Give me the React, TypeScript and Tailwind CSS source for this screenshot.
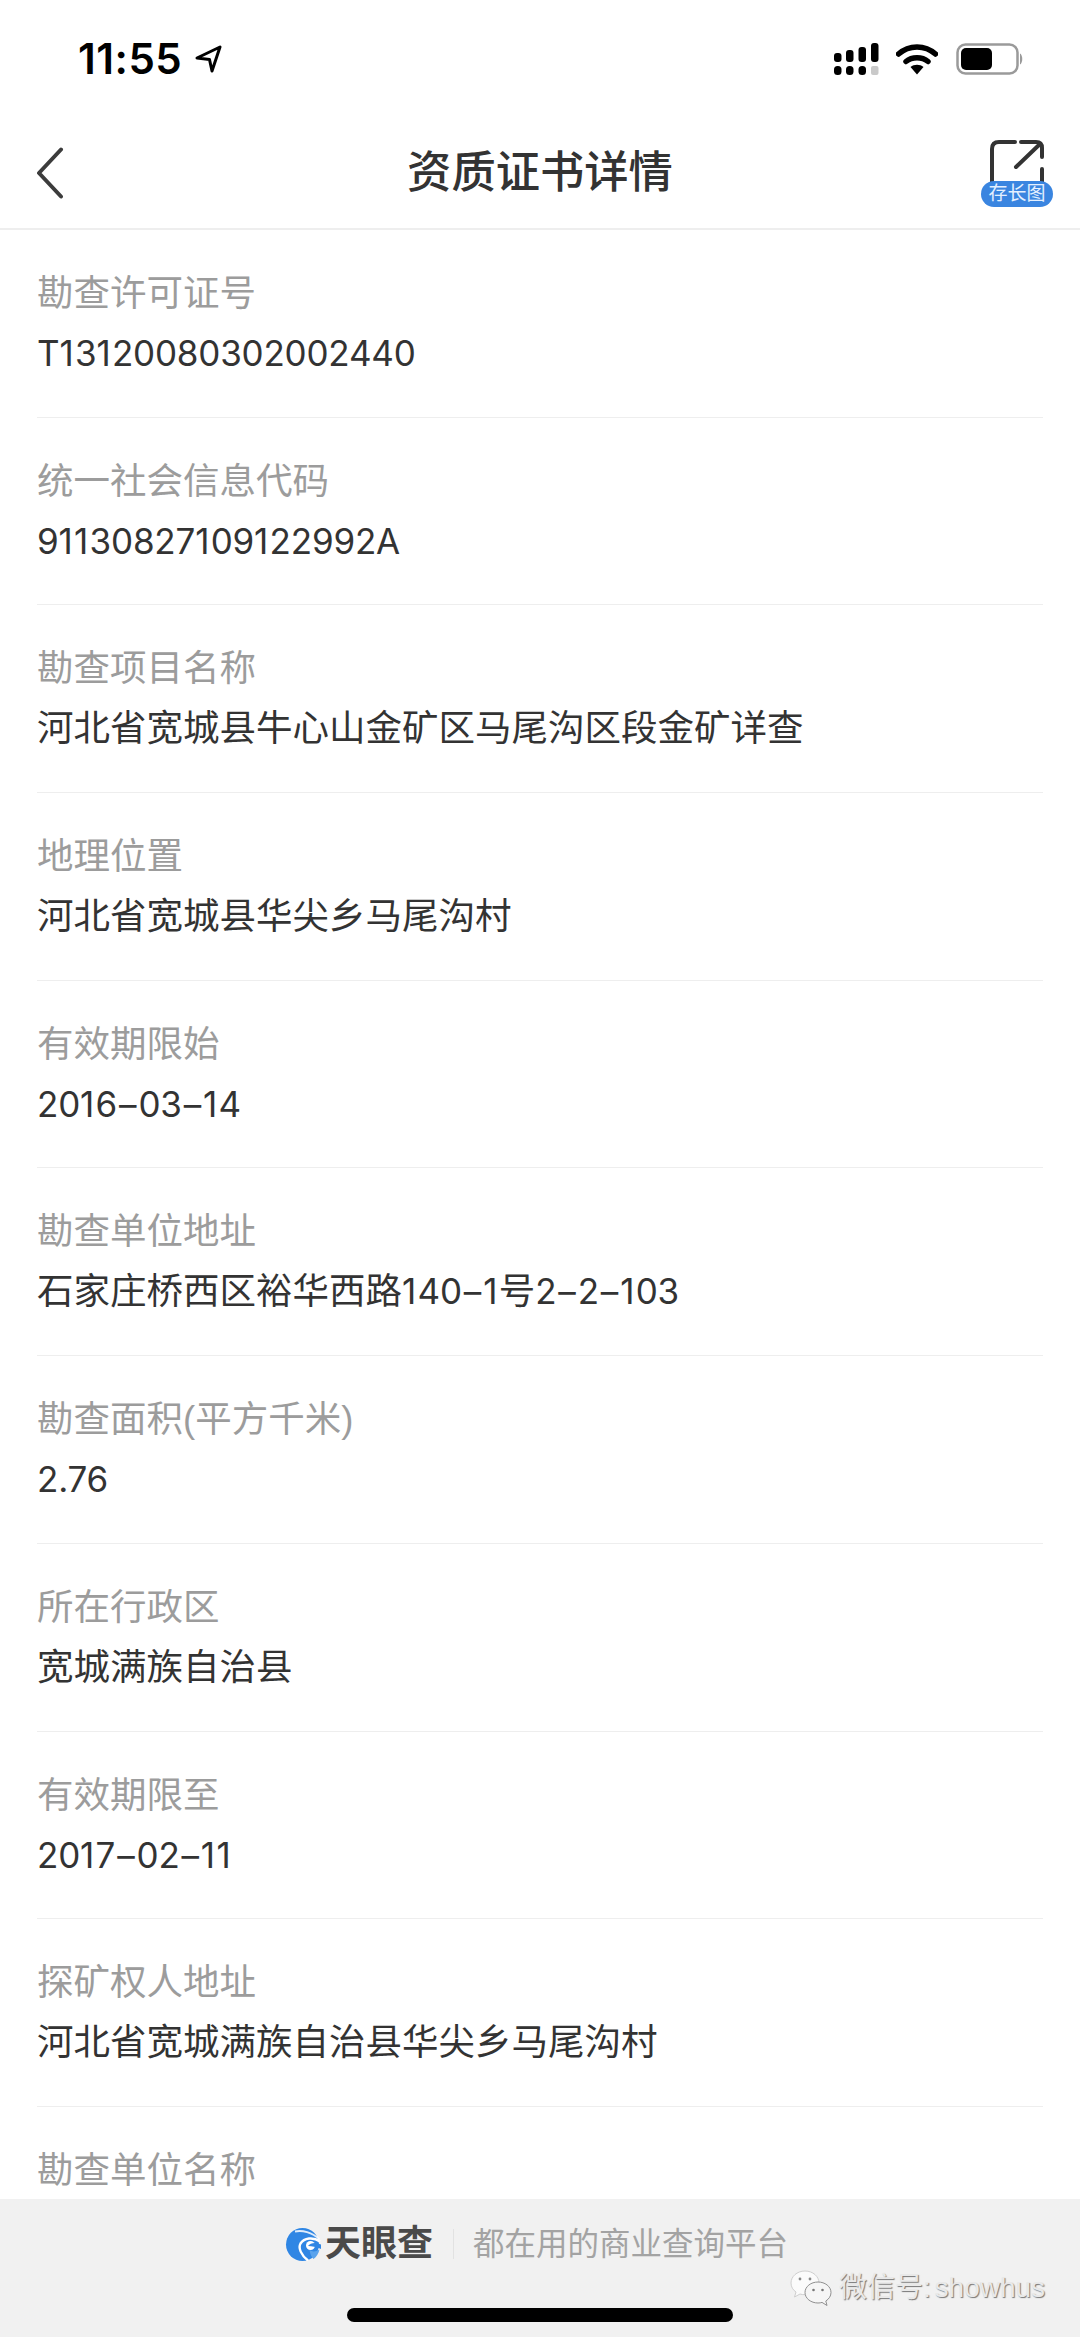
import React from "react";

const cjk = "font-['Liberation_Sans','Noto_Sans_CJK_SC',sans-serif]";

// Licence fields in display order
const fields: { label: string; value?: string }[] = [
  { label: "勘查许可证号", value: "T13120080302002440" },
  { label: "统一社会信息代码", value: "91130827109122992A" },
  { label: "勘查项目名称", value: "河北省宽城县牛心山金矿区马尾沟区段金矿详查" },
  { label: "地理位置", value: "河北省宽城县华尖乡马尾沟村" },
  { label: "有效期限始", value: "2016–03–14" },
  { label: "勘查单位地址", value: "石家庄桥西区裕华西路140–1号2–2–103" },
  { label: "勘查面积(平方千米)", value: "2.76" },
  { label: "所在行政区", value: "宽城满族自治县" },
  { label: "有效期限至", value: "2017–02–11" },
  { label: "探矿权人地址", value: "河北省宽城满族自治县华尖乡马尾沟村" },
  { label: "勘查单位名称" },
];

const LocationArrow = () => (
  <svg width="28" height="30" viewBox="0 0 28 30" fill="none">
    <path d="M2 14 L25 3 L17 27 L14.5 15.5 Z" stroke="#000" strokeWidth="3" strokeLinejoin="round" />
  </svg>
);

const SignalIcon = () => (
  <svg width="46" height="33" viewBox="0 0 46 33">
    <rect x="1" y="10" width="7.5" height="9" rx="3" fill="#000" />
    <rect x="13" y="7" width="7.5" height="12" rx="3" fill="#000" />
    <rect x="25.5" y="4" width="7.5" height="15" rx="3" fill="#000" />
    <rect x="38" y="0" width="7.5" height="19" rx="3" fill="#000" />
    <rect x="1" y="23" width="7.5" height="9" rx="3.5" fill="#000" />
    <rect x="13" y="23" width="7.5" height="9" rx="3.5" fill="#000" />
    <rect x="25.5" y="23" width="7.5" height="9" rx="3.5" fill="#000" />
    <rect x="38" y="23" width="7.5" height="9" rx="2" fill="#c9c9c9" />
  </svg>
);

const WifiIcon = () => (
  <svg width="42" height="32" viewBox="0 0 42 32" fill="none">
    <path d="M2.5 11 C13 1.5 29 1.5 39.5 11" stroke="#000" strokeWidth="5.5" strokeLinecap="round" />
    <path d="M10 18.5 C16 13.5 26 13.5 32 18.5" stroke="#000" strokeWidth="5.5" strokeLinecap="round" />
    <path d="M14.5 24 C18 21 24 21 27.5 24 L21 31.5 Z" fill="#000" />
  </svg>
);

const BatteryIcon = () => (
  <svg width="68" height="32" viewBox="0 0 68 32" fill="none">
    <rect x="1.5" y="1.5" width="60" height="29" rx="8" stroke="#9a9a9a" strokeWidth="2.5" />
    <rect x="5" y="5" width="31" height="22" rx="5" fill="#000" />
    <path d="M64 10.5 C67 12 67 20 64 21.5 Z" fill="#9a9a9a" />
  </svg>
);

const BackIcon = () => (
  <svg width="28" height="52" viewBox="0 0 28 52" fill="none">
    <path d="M25 2.5 L3 26 L25 49.5" stroke="#3c3c3c" strokeWidth="4" strokeLinecap="round" strokeLinejoin="round" />
  </svg>
);

const ShareBadge = () => (
  <div className="relative h-[67px] w-[72px]">
    <svg className="absolute left-[9px] top-0" width="54" height="48" viewBox="0 0 54 48" fill="none">
      <path d="M25 2 H9 Q2 2 2 9 V48" stroke="#333" strokeWidth="4" strokeLinecap="round" />
      <path d="M31 2 H46 Q52 2 52 8 V17" stroke="#333" strokeWidth="4" strokeLinecap="round" />
      <path d="M52 29 V48" stroke="#333" strokeWidth="4" strokeLinecap="round" />
      <path d="M26 27 L50 4" stroke="#333" strokeWidth="4" strokeLinecap="round" />
    </svg>
    <div className={`absolute bottom-0 left-0 flex h-[26px] w-[72px] items-center justify-center rounded-full bg-[#3a85e0] text-[19px] leading-none text-[#e4f0ff] ${cjk}`}>
      存长图
    </div>
  </div>
);

const BrandLogo = () => (
  <svg width="36" height="33" viewBox="0 0 36 33" fill="none">
    <circle cx="17.5" cy="16.5" r="16.5" fill="#2f86e4" />
    <path d="M10 3.5 C17 2 27 4 34.5 11.5" stroke="#fff" strokeWidth="1.8" opacity="0.85" />
    <path d="M35 13.5 C28 8.5 19 10 15.5 15.5 C13 20 16 27 23 32.5" stroke="#fff" strokeWidth="2.4" />
    <circle cx="25.5" cy="17.5" r="4.5" fill="#fff" />
    <path d="M23 18 C25.5 14.5 31 14 36 16.5 L36 21 C31 18.5 27 18.5 23 18 Z" fill="#2f86e4" />
    <path d="M34.5 21.5 C31 24 27 24 24.5 22 C25 26 26.5 29 28.5 31 C31.5 29 33.5 25.5 34.5 21.5 Z" fill="#5aa3ec" />
  </svg>
);

const WeChatMark = () => (
  <svg width="42" height="38" viewBox="0 0 42 38" fill="none">
    <path d="M15 2 C7 2 1 7.5 1 14 C1 18 3 21 6 23 L4.5 28 L10 25 C11.5 25.5 13 25.7 15 25.7 C23 25.7 29 20 29 14 C29 7.5 23 2 15 2 Z" fill="#fbfbfb" stroke="#cfcfcf" strokeWidth="1" />
    <path d="M28 13 C21 13 15 17.5 15 23.5 C15 29.5 21 34 28 34 C29.5 34 31 33.8 32 33.4 L37 36.5 L35.8 32 C39 30 41 27 41 23.5 C41 17.5 35 13 28 13 Z" fill="#f6f6f6" stroke="#8f8f8f" strokeWidth="1" />
    <circle cx="10" cy="10" r="1.4" fill="#8a8a8a" />
    <circle cx="20" cy="10" r="1.4" fill="#8a8a8a" />
    <circle cx="23.5" cy="21" r="1.3" fill="#777" />
    <circle cx="32.5" cy="21" r="1.3" fill="#777" />
  </svg>
);

// Latin runs use Inter; its "1" and en dash need a little extra room to sit like the app font
const LatinRun = ({ text }: { text: string }) => (
  <span className="font-['Inter',sans-serif] text-[35px] leading-none tracking-[-0.2px]">
    {text.split(/([1–])/).map((ch, i) =>
      ch === "1" ? (
        <span key={i} className="tracking-[1.3px]">{ch}</span>
      ) : ch === "–" ? (
        <span key={i} className="mx-[2px]">{ch}</span>
      ) : (
        ch
      )
    )}
  </span>
);

const FieldValue = ({ text }: { text: string }) => (
  <>
    {text.split(/([^\u4e00-\u9fff]+)/).map((part, i) =>
      i % 2 === 1 ? <LatinRun key={i} text={part} /> : part
    )}
  </>
);

const DetailRow = ({ label, value }: { label: string; value?: string }) => (
  <div className="border-b border-[#eeeeee] pb-[39.7px] pt-[41px] last:border-b-0">
    <div className="text-[36.5px] leading-[46px] text-[#9c9c9c]">{label}</div>
    {value && (
      <div className="mt-[14px] text-[36.5px] leading-[46px] text-[#333333]">
        <FieldValue text={value} />
      </div>
    )}
  </div>
);

export default function App() {
  return (
    <div className={`relative flex h-[2337px] w-[1080px] flex-col overflow-hidden bg-white ${cjk}`}>
      {/* status bar */}
      <div className="flex h-[118px] items-center justify-between pl-[78px] pr-[56px]">
        <div className="flex items-center gap-[13px]">
          <span className="font-['Inter',sans-serif] text-[42px] font-semibold leading-none tracking-[0.5px] text-black">11:55</span>
          <LocationArrow />
        </div>
        <div className="flex items-center">
          <div className="mr-[17px]"><SignalIcon /></div>
          <div className="mr-[18px]"><WifiIcon /></div>
          <BatteryIcon />
        </div>
      </div>

      {/* nav bar */}
      <div className="grid h-[112px] grid-cols-[1fr_auto_1fr] items-center border-b-2 border-[#eeeeee] px-[36px]">
        <div className="justify-self-start"><BackIcon /></div>
        <div className="text-[44.3px] font-medium leading-none text-[#333333]">资质证书详情</div>
        <div className="-mr-[9px] justify-self-end"><ShareBadge /></div>
      </div>

      {/* licence fields */}
      <div className="min-h-0 flex-1 overflow-hidden pl-[37px] pr-[37px]">
        {fields.map((f) => (
          <DetailRow key={f.label} label={f.label} value={f.value} />
        ))}
      </div>

      {/* brand footer */}
      <div className="h-[138px] shrink-0 bg-[#f1f1f1]">
        <div className="flex items-center pl-[285px] pt-[25px]">
          <BrandLogo />
          <span className="ml-[4px] text-[36px] font-bold leading-[40px] text-[#4a4a4a]">天眼查</span>
          <span className="ml-[20px] h-[30px] w-[1px] bg-[#e2e2e2]" />
          <span className="ml-[19px] text-[31.5px] leading-[40px] text-[#a3a3a3]">都在用的商业查询平台</span>
        </div>
        <div className="mx-auto mt-[44px] h-[14px] w-[386px] rounded-full bg-black" />
      </div>

      {/* watermark over the footer */}
      <div className="absolute left-[790px] top-[2269px] flex items-center gap-[7px]">
        <WeChatMark />
        <span className="text-[28px] leading-[38px] text-[#e9e9e9] [word-spacing:-4px] [text-shadow:1px_1px_1px_#777]">微信号: showhus</span>
      </div>
    </div>
  );
}
